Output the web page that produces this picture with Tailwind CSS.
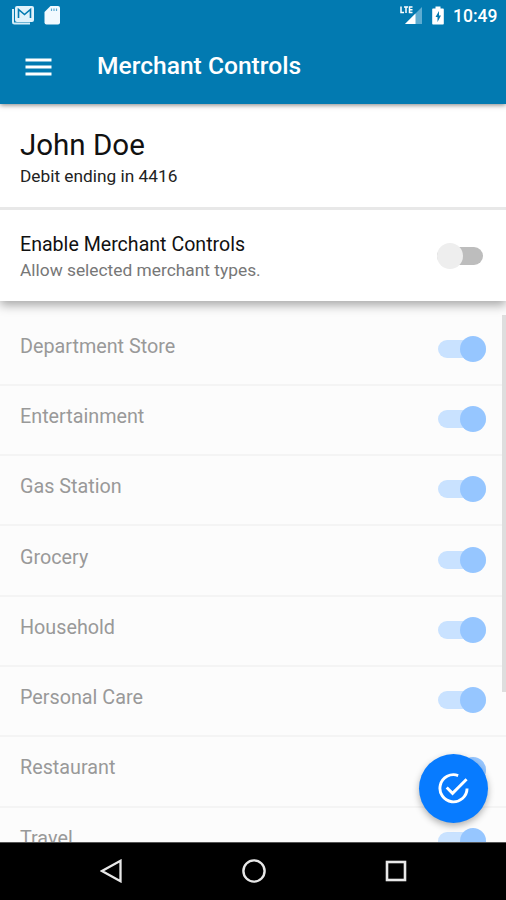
<!DOCTYPE html>
<html lang="en">
<head>
<meta charset="utf-8">
<title>Merchant Controls</title>
<script src="https://cdn.jsdelivr.net/npm/@tailwindcss/browser@4"></script>
</head>
<body class="bg-black">
<div class="relative flex h-[900px] w-[506px] flex-col overflow-hidden bg-black font-['Roboto',sans-serif] text-black">
  <header class="relative z-20 h-[104px] shrink-0 bg-[#027ab1] text-white shadow-[0_1px_5px_rgba(0,0,0,0.5)]">
    <div class="flex h-8 items-center pr-[9px] pl-[11px]">
      <svg class="h-6 w-[24px] shrink-0" viewBox="0 0 24 24" fill="none">
        <path d="M2 5v13q0 1.500 1.500 1.500H19" stroke="#d5edf8" stroke-width="2"/>
        <rect x="4" y="2" width="19" height="16" rx="2" fill="#e0f2fb"/>
        <path d="M7.500 14V5.500l6 5 6-5V14" stroke="#027ab1" stroke-width="1.600"/>
      </svg>
      <svg class="ml-[9px] h-6 w-[17px] shrink-0" viewBox="0 0 17 24">
        <path d="M6.500 2H14q2 0 2 2v14.500q0 2-2 2H2.500q-2 0-2-2V8z" fill="#f2faff"/>
        <path d="M7.500 4.500v2.500M10 4.500v2.500M12.500 4.500v2.500" stroke="#5aa9cf" stroke-width="1.200"/>
      </svg>
      <svg class="ml-auto h-6 w-[23px] shrink-0" viewBox="0 0 23 24">
        <path d="M5 20 22 3v17z" fill="#5eacd1"/>
        <path d="M5 20 15.500 9.500V20z" fill="#fff"/>
        <path d="M1 2.500v6h3M4 3h4M6 3v6M12.500 3H9.500v5.500h3M9.500 5.700h3" fill="none" stroke="#fff" stroke-width="1.500"/>
      </svg>
      <svg class="ml-[9px] h-6 w-[12px] shrink-0" viewBox="0 0 12 24">
        <path d="M3.500 2.500h5v2H11q.8 0 .8.800v14.400q0 .8-.8.800H1q-.8 0-.8-.8V5.300q0-.8.8-.8h2.500z" fill="#fff"/>
        <path d="M7 7 3.500 13h2v5L9 11.500H7z" fill="#027ab1"/>
      </svg>
      <span class="ml-[9px] w-[44px] text-[17.500px] leading-8 font-medium whitespace-nowrap">10:49</span>
    </div>
    <div class="flex h-[70px] items-center pl-[25px]">
      <svg class="h-[20px] w-[27px]" viewBox="0 0 27 20" stroke="#fff" stroke-width="3"><path d="M.5 3h26M.5 10h26M.5 17h26"/></svg>
      <h1 class="ml-[45px] pb-[2px] text-[24.600px] leading-8 font-medium whitespace-nowrap">Merchant Controls</h1>
    </div>
  </header>

  <section class="flex h-[106px] shrink-0 flex-col border-b-[3px] border-[#e8e8e8] bg-white pt-[23px] pl-5">
    <h2 class="text-[29.500px] leading-9 text-[#111]">John Doe</h2>
    <p class="mt-px text-[17.300px] leading-6 text-[#222]">Debit ending in 4416</p>
  </section>

  <section class="relative z-10 flex h-[91px] shrink-0 items-center justify-between bg-white pr-[23px] pl-5 shadow-[0_4px_10px_rgba(0,0,0,0.35)] [clip-path:inset(0_0_-20px_0)]">
    <div class="pt-[3px]">
      <h3 class="text-[19.600px] leading-[26px] text-[#111]">Enable Merchant Controls</h3>
      <p class="text-[17.350px] leading-6 text-[#777]">Allow selected merchant types.</p>
    </div>
    <div class="flex h-[18px] w-[46px] items-center rounded-full bg-[#bdbdbd]"><div class="size-[26px] shrink-0 rounded-full bg-[#eeeeee]"></div></div>
  </section>

  <main class="relative h-[541px] shrink-0 overflow-hidden bg-[#fcfcfc] pt-[14.500px]">
    <ul id="merchants" class="text-[19.750px] text-[#999]"></ul>
    <div class="absolute top-[14px] right-0 h-[377px] w-1 bg-[#dedede]"></div>
  </main>

  <button class="absolute top-[754px] left-[419px] z-20 flex size-[69px] items-center justify-center rounded-full bg-[#077bff] shadow-[0_3px_7px_rgba(0,0,0,0.3)]" aria-label="Save">
    <svg class="size-[31px]" viewBox="0 0 32 32" fill="none" stroke="#fff" stroke-width="3"><path d="M20.800 2.600A14 14 0 1 0 30 16M9 15l6 6L29.500 6.500"/></svg>
  </button>

  <nav class="relative z-10 flex h-[58px] shrink-0 items-center justify-between border-t border-[#555] bg-black pr-[99px] pb-[2px] pl-[100px]">
    <svg class="h-6 w-[22px]" viewBox="0 0 22 24" fill="none" stroke="#e8e8e8" stroke-width="2.300"><path d="M20.500 1.800v20.400L2 12z"/></svg>
    <svg class="size-6" viewBox="0 0 24 24" fill="none" stroke="#e8e8e8" stroke-width="2.400"><circle cx="12" cy="12" r="10.600"/></svg>
    <svg class="size-[22px]" viewBox="0 0 22 22" fill="none" stroke="#e8e8e8" stroke-width="2.600"><rect x="2" y="2" width="18" height="18"/></svg>
  </nav>
</div>
<script>
const names = ['Department Store', 'Entertainment', 'Gas Station', 'Grocery', 'Household', 'Personal Care', 'Restaurant', 'Travel'];
document.getElementById('merchants').innerHTML = names.map(name => `
  <li class="flex h-[70.3px] items-center justify-between border-b-2 border-[#f4f4f4] pr-5 pb-[2px] pl-5">
    <span class="-mt-[4px] leading-7">${name}</span>
    <span class="flex h-[18px] w-[48px] items-center justify-end rounded-full bg-[#c9e2ff]"><span class="size-[26px] shrink-0 rounded-full bg-[#96c6ff]"></span></span>
  </li>`).join('');
</script>
</body>
</html>
